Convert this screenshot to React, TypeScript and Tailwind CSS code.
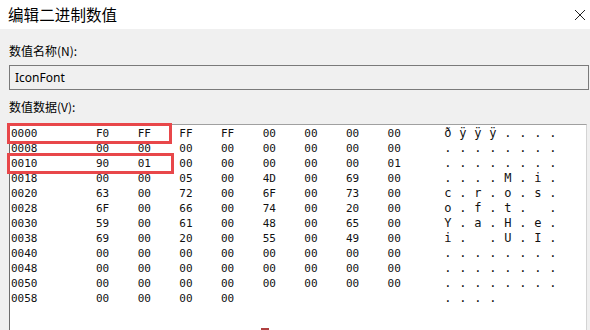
const rows: [string, string[], string[]][] = [
  ["0000", ["F0", "FF", "FF", "FF", "00", "00", "00", "00"], ["ð", "ÿ", "ÿ", "ÿ", ".", ".", ".", "."]],
  ["0008", ["00", "00", "00", "00", "00", "00", "00", "00"], [".", ".", ".", ".", ".", ".", ".", "."]],
  ["0010", ["90", "01", "00", "00", "00", "00", "00", "01"], [".", ".", ".", ".", ".", ".", ".", "."]],
  ["0018", ["00", "00", "05", "00", "4D", "00", "69", "00"], [".", ".", ".", ".", "M", ".", "i", "."]],
  ["0020", ["63", "00", "72", "00", "6F", "00", "73", "00"], ["c", ".", "r", ".", "o", ".", "s", "."]],
  ["0028", ["6F", "00", "66", "00", "74", "00", "20", "00"], ["o", ".", "f", ".", "t", ".", " ", "."]],
  ["0030", ["59", "00", "61", "00", "48", "00", "65", "00"], ["Y", ".", "a", ".", "H", ".", "e", "."]],
  ["0038", ["69", "00", "20", "00", "55", "00", "49", "00"], ["i", ".", " ", ".", "U", ".", "I", "."]],
  ["0040", ["00", "00", "00", "00", "00", "00", "00", "00"], [".", ".", ".", ".", ".", ".", ".", "."]],
  ["0048", ["00", "00", "00", "00", "00", "00", "00", "00"], [".", ".", ".", ".", ".", ".", ".", "."]],
  ["0050", ["00", "00", "00", "00", "00", "00", "00", "00"], [".", ".", ".", ".", ".", ".", ".", "."]],
  ["0058", ["00", "00", "00", "00"], [".", ".", ".", "."]],
];

export default function App() {
  return (
    <div className="w-[590px] h-[330px] overflow-hidden bg-[#f0f0f0] font-['Noto_Sans_CJK_SC',sans-serif] text-black">
      <div className="h-[29px] bg-white flex items-center justify-between pl-[8px] pr-[3px]">
        <span className="text-[15.5px] leading-none tracking-[0.1px]">编辑二进制数值</span>
        <svg width="12" height="12" viewBox="0 0 12 12" className="mr-[1px]">
          <path d="M1 1 L11 11 M11 1 L1 11" stroke="#222" strokeWidth="1" fill="none" />
        </svg>
      </div>
      <div className="pl-[9px] pr-[1px]">
        <div className="text-[12px] leading-[16px] pt-[14px] h-[36px]">数值名称(N):</div>
        <div className="h-[25px] border border-[#7a7a7a] bg-[#f0f0f0] flex items-center pl-[5px] font-['Noto_Sans','Segoe_UI',sans-serif] text-[12px]">
          IconFont
        </div>
        <div className="text-[12px] leading-[16px] pt-[9px] h-[34px]">数值数据(V):</div>
        <div className="relative h-[220px] bg-white border-l border-t border-l-[#6d6d6d] border-t-[#a0a0a0] border-r border-r-[#d4d4d4] mr-[2px] pt-[1px] pl-[1px] font-['DejaVu_Sans_Mono',monospace] text-[11px] leading-[15px] text-[#111]">
          {rows.map(([off, hex, asc]) => (
            <div key={off} className="flex h-[15px]">
              <div className="w-[85px] shrink-0">{off}</div>
              <div className="grid grid-cols-[repeat(8,41.67px)] shrink-0">
                {hex.map((h, i) => (
                  <span key={i}>{h}</span>
                ))}
              </div>
              <div className="flex pl-[15px] text-[12px]">
                {asc.map((a, i) => (
                  <span key={i} className="w-[15px] shrink-0 whitespace-pre">
                    {a}
                  </span>
                ))}
              </div>
            </div>
          ))}
          <div className="absolute left-[-3px] top-[-2px] w-[165px] h-[21px] border-[3px] border-[#e8474a]" />
          <div className="absolute left-[-3px] top-[28px] w-[167px] h-[21px] border-[3px] border-[#e8474a]" />
          <div className="absolute left-[251px] top-[203px] w-[8px] h-[3px] bg-[#b04040]" />
        </div>
      </div>
    </div>
  );
}
